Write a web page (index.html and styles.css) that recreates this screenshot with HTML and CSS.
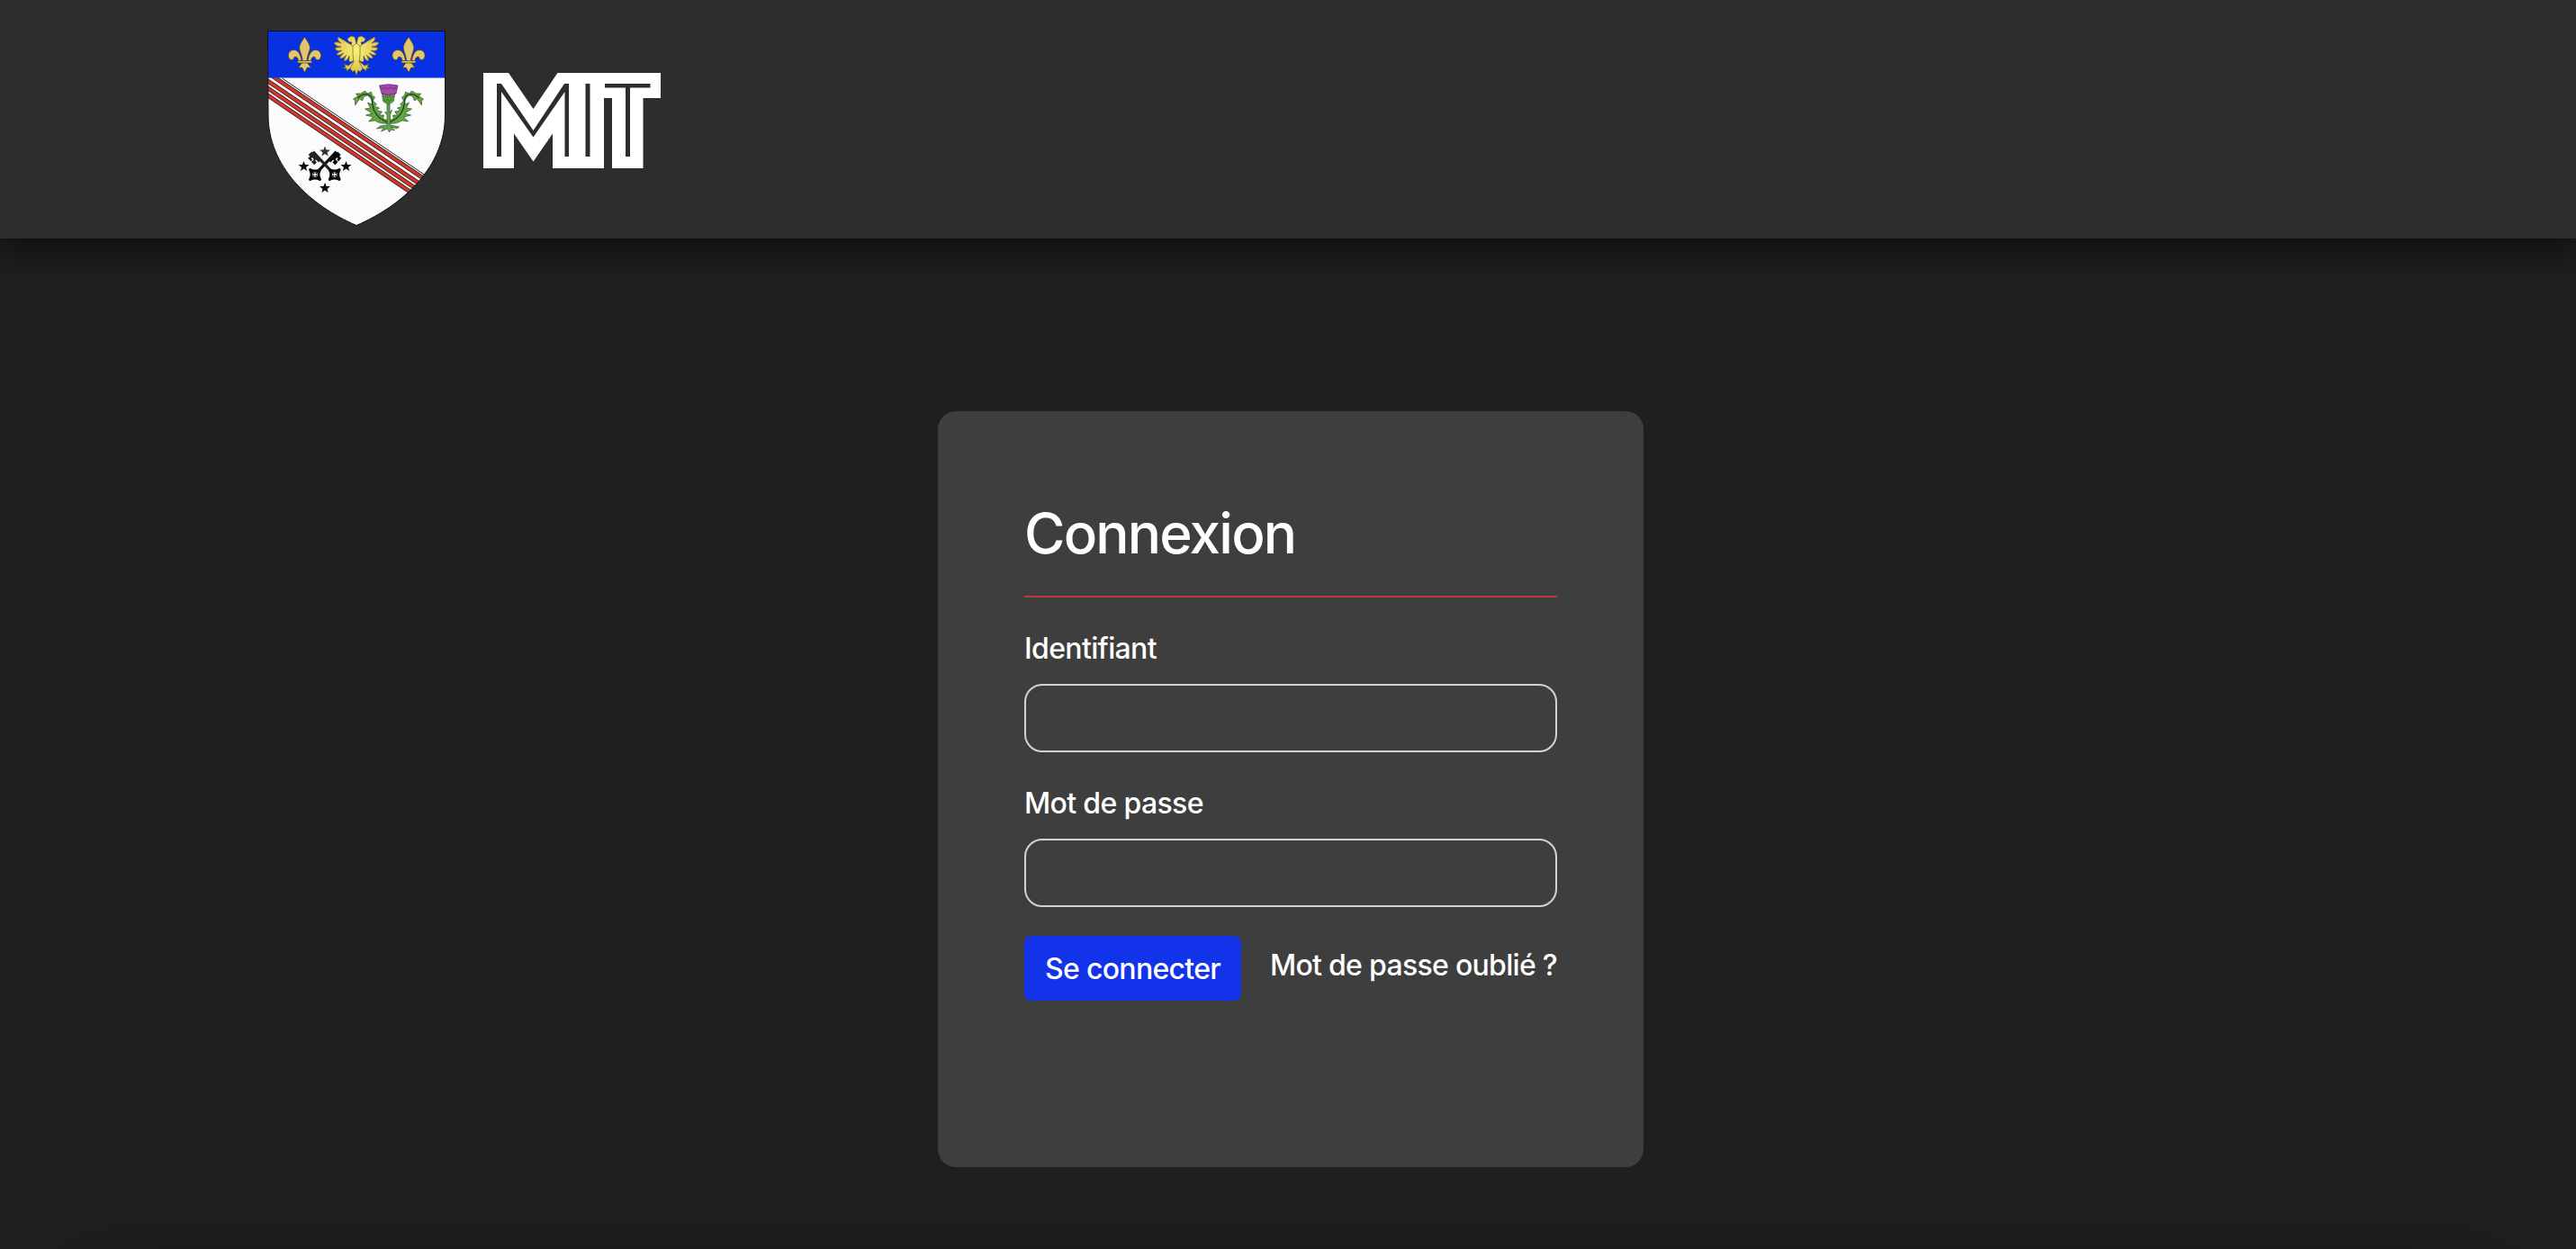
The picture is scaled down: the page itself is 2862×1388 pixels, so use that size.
FILE: index.html
```html
<!DOCTYPE html>
<html lang="fr">
<head>
<meta charset="utf-8">
<title>MIT - Connexion</title>
<link rel="stylesheet" href="styles.css">
</head>
<body>
<div class="app">
<header class="site-header">
  <svg class="crest" viewBox="0 0 240 240" role="img" aria-label="Blason">
    <defs>
      <clipPath id="shield"><path d="M17.5 14.5H214.5V108C214.5 165 168 208 116 230.500C64 208 18 165 18 108Z"/></clipPath>
      <radialGradient id="gold" gradientUnits="userSpaceOnUse" cx="0" cy="-4" r="25"><stop offset="0" stop-color="#fbf17c"/><stop offset="1" stop-color="#dcc04f"/></radialGradient>
      <g id="lys" stroke="#3d3320" stroke-width=".7" fill="#e3c56d">
        <path d="M0-19.500C-4-13-7-10-5.500-5C-4 0-2.500 3-2.500 8H2.500C2.500 3 4 0 5.500-5C7-10 4-13 0-19.500Z"/>
        <path d="M-3.500 7.500C-4 1-7-5-12-5C-17-5-19.500 0-17.500 4C-16 7-12 7-11.500 3C-9 2-7 4-7 7.500Z"/>
        <path d="M3.500 7.500C4 1 7-5 12-5C17-5 19.500 0 17.500 4C16 7 12 7 11.500 3C9 2 7 4 7 7.500Z"/>
        <path d="M-3 9L-7 15L-3 14.500L0 20L3 14.500L7 15L3 9Z"/>
        <rect x="-8" y="7" width="16" height="2.400" rx="1"/>
      </g>
      <path id="star" d="M0-6L1.600-2L5.900-1.900L2.500.9L3.700 5L0 2.600L-3.700 5L-2.500.9L-5.900-1.900L-1.600-2Z"/>
      <g id="wing">
        <path d="M-2 6L-3-9L-9-12C-13-15-17-17-20-19C-22-17-20-14-17-12C-20-13-23-14-25-12C-23-9-20-8-17-8C-20-7-23-8-24-6C-22-3-19-3-16-4C-19-2-21-2-22 1C-19 2-16 0-14-1C-16 1-19 3-18 5C-15 5-13 3-11 1C-13 4-14 6-13 8C-10 7-9 4-8 2C-8 5-9 8-7 9L-2 7Z"/>
        <path d="M-1-6L-6-10L-5-13L-9-14L-10-17L-6-20L-2-19L0-11Z"/>
        <path d="M-3 8L-9 13L-14 11L-12 14L-15 16L-11 16L-11 19L-7 16L-1 12Z"/>
      </g>
      <g id="branch">
        <path d="M0 30C-7 31-12 29-15 27L-22 28L-17 23L-25 21L-18 19L-26 14L-20 13L-23 7L-18 9L-19 3L-23-1L-27 0L-29 5L-32 3L-37 10L-37 5L-39 3L-34 0L-36-3L-31-3L-26-6L-23-3L-19-5L-18-1L-15 1L-17 5L-13 9L-16 11L-10 13L-13 16L-7 17L-10 21L-5 21L-6 25L0 27Z"/>
        <path d="M-34 2C-27-5-19-3-18 4C-18 14-14 24-1 29" fill="none" stroke="#17350f" stroke-width="1.100"/>
      </g>
      <g id="key">
        <path d="M-1.600-19H1.600V12H-1.600Z"/>
        <path d="M1-20H6V-17.500H9V-13H6.500V-15H5V-12H9V-7.500H5V-10H3.500V-6H1Z"/>
      </g>
      <g id="bow">
        <path d="M-5.500-5.500Q0-2.500 5.500-5.500Q2.500 0 5.500 5.500Q0 2.500-5.500 5.500Q-2.500 0-5.500-5.500Z" fill="#fbfbfc" stroke="#080808" stroke-width="2.800" stroke-linejoin="round"/>
        <path d="M-3-3L3 3M3-3L-3 3" stroke="#080808" stroke-width="1.400"/>
        <circle r="1.300" fill="#fbfbfc"/>
      </g>
    </defs>
    <g clip-path="url(#shield)">
      <rect width="240" height="240" fill="#fbfbfc"/>
      <g transform="translate(17.500 67)" fill="none">
        <path d="M-10-12.800L190 122.800M-10-3.800L190 131.800M-10 4.200L190 139.800M-10 12.200L190 147.800" stroke="#302522" stroke-width="4.800"/>
        <path d="M-10-12.800L190 122.800M-10-3.800L190 131.800M-10 4.200L190 139.800M-10 12.200L190 147.800" stroke="#d9352b" stroke-width="3.200"/>
        <path d="M16 0L190 118" stroke="#222"/>
      </g>
      <rect x="17" y="14" width="198" height="52.500" fill="#0831e3"/>
    </g>
    <use href="#lys" x="58.500" y="40.500"/><use href="#lys" x="174" y="40.500"/>
    <g transform="translate(116 40)" fill="url(#gold)" stroke="#5f531d" stroke-width=".6" stroke-linejoin="round">
      <use href="#wing"/><use href="#wing" transform="scale(-1 1)"/>
      <path d="M0-12L-4-9L-4 0L-3 9L-7 16L-4 20L-2 18L0 24L2 18L4 20L7 16L3 9L4 0L4-9Z"/>
    </g>
    <g transform="translate(151.500 87)" fill="#62a547" stroke="#254518" stroke-width=".6" stroke-linejoin="round">
      <use href="#branch"/><use href="#branch" transform="scale(-1 1)"/>
      <path d="M-1.500 7H1.500V18L4 15L2 21V32L12 34L9 36L3 34L7 38L3 37L1 40L-1 36L-8 39L-5 35L-13 36L-9 33L-1.500 32V21L-4 17L-1.500 19Z"/>
      <path d="M-7-3L7-3L6 5C4 9-4 9-6 5Z"/>
      <path d="M-6-1L-4 2L-2-1L0 2L2-1L4 2L6-1M-5 3L-3 6L-1 3L1 6L3 3L5 5" fill="none"/>
      <path d="M-10-12Q0-14.500 10.500-12L8.500-3Q0 0-7.500-3Z" fill="#a848ad" stroke="#4c174f"/>
      <path d="M-9-10L-6-8L-4-10L-1-8L2-10L5-8L9-10" fill="none" stroke="#4c174f"/>
    </g>
    <g fill="#080808">
      <use href="#key" transform="translate(80.700 162.500) rotate(43)"/>
      <use href="#key" transform="translate(80.700 162.500) rotate(-43) scale(-1 1)" fill="#222"/>
      <use href="#bow" x="70" y="174"/><use href="#bow" x="91.700" y="174"/>
      <use href="#star" x="81" y="148.500" fill="#333"/><use href="#star" x="57.500" y="165"/><use href="#star" x="104.500" y="165"/><use href="#star" x="81" y="189"/>
    </g>
    <path d="M17.500 14.500H214.500V108C214.500 165 168 208 116 230.500C64 208 18 165 18 108Z" fill="none" stroke="#111"/>
  </svg>
  <svg class="wordmark" viewBox="0 0 230 150" role="img" aria-label="MIT">
    <path fill="#fff" d="M17 21H45L72.500 61L99.500 21H214V49H194.500V127H160V49H151V127H94V88.500L72.500 119.500L51 88.500V127H17Z"/>
    <path fill="#2d2d2d" d="M32 33H37L72.500 85L107 33H112V114H107.500V42L72.500 92.500L37 42V114H32ZM130.500 33H135.500V114H130.500ZM152 33H202.500V37.500H180V114H175V37.500H152Z"/>
  </svg>
</header>
<main class="page">
  <form class="card">
    <h1 class="title">Connexion</h1>
    <hr class="rule">
    <label class="label" for="login">Identifiant</label>
    <input class="field" id="login" type="text">
    <label class="label" for="password">Mot de passe</label>
    <input class="field" id="password" type="password">
    <div class="actions">
      <button class="submit" type="button">Se connecter</button>
      <a class="forgot" href="#">Mot de passe oublié ?</a>
    </div>
  </form>
</main>
<footer class="site-footer"></footer>
</div>
</body>
</html>
```
FILE: styles.css
```css
* { box-sizing: border-box; }
body {
  margin: 0;
  background: #1f1f1f;
  color: #fff;
  font: 450 32px/48px Inter, "Liberation Sans", sans-serif;
}
.app {
  height: 1388px;
  overflow: hidden;
  display: flex;
  flex-direction: column;
}
.site-header {
  flex: none;
  height: 265px;
  padding: 20px 0 0 280px;
  display: flex;
  background: #2d2d2d;
  box-shadow: 0 16px 32px rgba(0, 0, 0, .5);
}
.crest { width: 240px; height: 240px; }
.wordmark { width: 230px; height: 150px; margin-top: 40px; }
.page { flex: none; height: 1123px; padding: 192px 0 0 1042px; }
.card {
  width: 784px;
  height: 840px;
  padding: 96px;
  border-radius: 20px;
  background: #3e3e3e;
  display: flex;
  flex-direction: column;
}
.title { margin: 0; padding-top: 2px; font-size: 62px; line-height: 75px; font-weight: 550; letter-spacing: -1.8px; }
.rule { width: 100%; height: 2px; margin: 32px 0; border: 0; background: #b93a3c; }
.label { height: 48px; margin-bottom: 16px; padding-top: 1px; letter-spacing: -.65px; }
.field {
  width: 100%;
  height: 76px;
  margin: 0 0 32px;
  padding: 12px 24px;
  border: 2px solid #ced4da;
  border-radius: 20px;
  background: transparent;
  color: #fff;
  font: inherit;
}
.field:focus { outline: none; }
.actions { display: flex; justify-content: space-between; align-items: flex-start; white-space: nowrap; }
.submit {
  width: 241px;
  height: 72px;
  padding: 2px 0 0;
  border: 0;
  border-radius: 8px;
  background: #1233ea;
  color: #fff;
  font: inherit;
  letter-spacing: -.7px;
}
.forgot { margin-top: 9px; color: #fff; text-decoration: none; letter-spacing: -.7px; }
.site-footer { flex: none; height: 400px; background: #2d2d2d; box-shadow: 0 -48px 88px -84px rgba(0, 0, 0, .5); }
```
